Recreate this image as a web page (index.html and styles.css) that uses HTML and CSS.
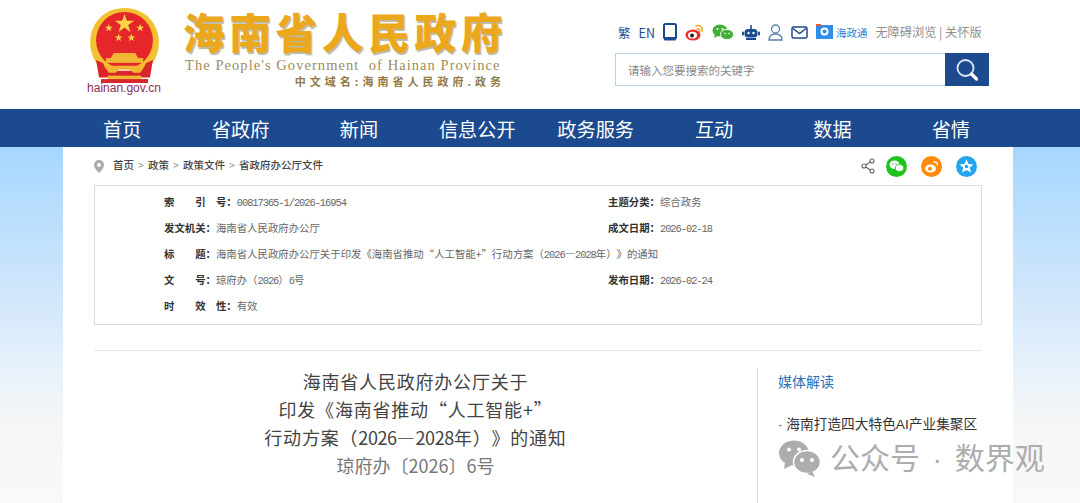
FILE: index.html
```html
<!DOCTYPE html>
<html lang="zh-CN">
<head>
    <meta charset="UTF-8">
    <meta name="viewport" content="width=device-width, initial-scale=1.0">
    <title>海南省人民政府</title>
    <link rel="stylesheet" href="styles.css">
</head>
<body>
    <header class="top">
        <div class="emblem">
            <svg class="emblem-img" width="71" height="75" viewBox="2 1 70 76.500">
                <path d="M37 1C17 1 2 16 2 36c0 12 5 21 12 28h46c7-7 12-16 12-28C72 16 57 1 37 1z" fill="#f2c230"/>
                <circle cx="37" cy="34" r="29" fill="#e5262a"/>
                <polygon points="37,7 39.400,14 46.800,14 40.800,18.400 43,25.400 37,21 31,25.400 33.200,18.400 27.200,14 34.600,14" fill="#f8d648"/>
                <polygon points="21,17 22,20 25,20 22.600,21.800 23.500,24.800 21,23 18.500,24.800 19.400,21.800 17,20 20,20" fill="#f8d648"/>
                <polygon points="53,17 54,20 57,20 54.600,21.800 55.500,24.800 53,23 50.500,24.800 51.400,21.800 49,20 52,20" fill="#f8d648"/>
                <polygon points="31,27 32,30 35,30 32.600,31.800 33.500,34.800 31,33 28.500,34.800 29.400,31.800 27,30 30,30" fill="#f8d648"/>
                <polygon points="44,27 45,30 48,30 45.600,31.800 46.500,34.800 44,33 41.500,34.800 42.400,31.800 40,30 43,30" fill="#f8d648"/>
                <path d="M26 47h22l3 5H23z" fill="#f2b632"/>
                <rect x="18" y="52" width="38" height="5" fill="#f2b632"/>
                <path d="M8 54l7 3c2 5 7 8 13 8h18c6 0 11-3 13-8l7-3-3 18H11z" fill="#d8262a"/>
                <path d="M16 60h42l-5 7h-7l-4-4h-10l-4 4h-7z" fill="#f2b632"/>
                <rect x="20" y="70" width="34" height="4" fill="#f2b632"/>
                <rect x="13" y="73.500" width="48" height="4" fill="#d8262a"/>
            </svg>
            <span class="domain">hainan.gov.cn</span>
        </div>
        <div class="brand">
            <div class="brand-name">海南省人民政府</div>
            <div class="brand-en">The People's Government&nbsp; of Hainan Province</div>
            <div class="brand-cn">中文域名:海南省人民政府.政务</div>
        </div>
        <div class="tools">
            <div class="tool-row">
                <a class="tool-link">繁</a>
                <a class="tool-link">EN</a>
                <svg class="tool-icon" width="14" height="18" viewBox="0 0 14 18"><rect x="1" y="1" width="12" height="14.500" rx="1.500" fill="none" stroke="#1c4a8f" stroke-width="2"/><rect x="1" y="14" width="12" height="3.500" rx="1" fill="#1c4a8f"/></svg>
                <svg class="tool-icon" width="19" height="17" viewBox="0 0 19 17"><ellipse cx="8" cy="11" rx="7.500" ry="5.500" fill="#e6312a"/><ellipse cx="7.500" cy="11.200" rx="4.500" ry="3.400" fill="#fff"/><circle cx="7" cy="11.400" r="2" fill="#222"/><path d="M11 2c4-1.500 7 1.500 6 5.500M12 5c2-.6 3 .6 2.600 2.400" fill="none" stroke="#f5a623" stroke-width="1.500" stroke-linecap="round"/></svg>
                <svg class="tool-icon" width="22" height="17" viewBox="0 0 22 17"><ellipse cx="8" cy="6.500" rx="7.500" ry="6" fill="#41b035"/><path d="M3 10l-1 4 4-2z" fill="#41b035"/><ellipse cx="15" cy="10.500" rx="6.500" ry="5.200" fill="#41b035" stroke="#fff" stroke-width="1"/><circle cx="5.500" cy="5" r="1" fill="#fff"/><circle cx="10.500" cy="5" r="1" fill="#fff"/><circle cx="13" cy="9.500" r=".8" fill="#fff"/><circle cx="17" cy="9.500" r=".8" fill="#fff"/></svg>
                <svg class="tool-icon" width="18" height="15" viewBox="0 0 18 15"><rect x="8.200" y="0" width="1.600" height="5" fill="#1c4a8f"/><rect x="2.500" y="4" width="13" height="8.500" rx="3.500" fill="#1c4a8f"/><rect x="0" y="6.500" width="2" height="4" rx="1" fill="#1c4a8f"/><rect x="16" y="6.500" width="2" height="4" rx="1" fill="#1c4a8f"/><circle cx="6.500" cy="8" r="1.200" fill="#fff"/><circle cx="11.500" cy="8" r="1.200" fill="#fff"/><rect x="4" y="13" width="10" height="2" fill="#1c4a8f"/></svg>
                <svg class="tool-icon" width="15" height="17" viewBox="0 0 15 17"><circle cx="7.500" cy="5" r="4" fill="none" stroke="#5a7fa8" stroke-width="1.300"/><path d="M1 16c0-4 2.500-6 6.500-6s6.500 2 6.500 6z" fill="none" stroke="#5a7fa8" stroke-width="1.300"/></svg>
                <svg class="tool-icon" width="17" height="13" viewBox="0 0 17 13"><rect x="1" y="1" width="15" height="11" rx="1.500" fill="none" stroke="#1c4a8f" stroke-width="1.500"/><path d="M2 2.500l6.500 5 6.500-5" fill="none" stroke="#1c4a8f" stroke-width="1.500"/></svg>
                <a class="tool-app">
                    <svg width="17" height="17" viewBox="0 0 17 17"><rect width="17" height="14" y="1" fill="#2f8fe8"/><rect width="5" height="2" fill="#e65a3a"/><circle cx="8.500" cy="7.500" r="4" fill="#fff"/><circle cx="8.500" cy="7.500" r="2" fill="#2f8fe8"/></svg>
                    海政通
                </a>
                <a class="tool-access">无障碍浏览 | 关怀版</a>
            </div>
            <form class="search">
                <input class="search-input" type="text" placeholder="请输入您要搜索的关键字">
                <button class="search-btn" type="button" aria-label="搜索">
                    <svg width="26" height="26" viewBox="0 0 26 26"><circle cx="11.500" cy="11" r="8" fill="none" stroke="#dfe8f2" stroke-width="1.800"/><path d="M17.500 17l5 5" stroke="#fff" stroke-width="3.200" stroke-linecap="round"/></svg>
                </button>
            </form>
        </div>
    </header>

    <nav class="nav">
        <a>首页</a>
        <a>省政府</a>
        <a>新闻</a>
        <a>信息公开</a>
        <a>政务服务</a>
        <a>互动</a>
        <a>数据</a>
        <a>省情</a>
    </nav>

    <main class="page">
        <div class="crumb-row">
            <div class="crumbs">
                <svg width="10" height="13" viewBox="0 0 10 13"><path d="M5 0a5 5 0 0 0-5 5c0 3.500 5 8 5 8s5-4.500 5-8a5 5 0 0 0-5-5z" fill="#aaa"/><circle cx="5" cy="5" r="2" fill="#fff"/></svg>
                <div class="crumb-text">
                    <span>首页</span><span class="crumb-sep">&gt;</span><span>政策</span><span class="crumb-sep">&gt;</span><span>政策文件</span><span class="crumb-sep">&gt;</span><span>省政府办公厅文件</span>
                </div>
            </div>
            <div class="share">
                <svg class="share-first" width="14" height="16" viewBox="0 0 14 16"><g fill="none" stroke="#666" stroke-width="1.100"><circle cx="3" cy="8" r="2"/><circle cx="11" cy="3" r="2"/><circle cx="11" cy="13" r="2"/><path d="M4.800 7l4.500-3M4.800 9l4.500 3"/></g></svg>
                <svg class="share-icon" width="21" height="21" viewBox="0 0 21 21"><circle cx="10.500" cy="10.500" r="10.500" fill="#1ec31e"/><ellipse cx="8.500" cy="8.800" rx="5" ry="4.200" fill="#fff"/><ellipse cx="13.500" cy="12" rx="4.200" ry="3.400" fill="#fff" stroke="#1ec31e" stroke-width=".8"/><circle cx="7" cy="8" r=".7" fill="#1ec31e"/><circle cx="10" cy="8" r=".7" fill="#1ec31e"/></svg>
                <svg class="share-icon" width="21" height="21" viewBox="0 0 21 21"><circle cx="10.500" cy="10.500" r="10.500" fill="#ff8a0c"/><ellipse cx="9.500" cy="12.500" rx="5.500" ry="4" fill="#fff"/><circle cx="9" cy="12.700" r="2" fill="#ff8a0c"/><path d="M12.500 6c2.500-.8 4.500 1 4 3.500" fill="none" stroke="#fff" stroke-width="1.200" stroke-linecap="round"/></svg>
                <svg class="share-icon" width="21" height="21" viewBox="0 0 21 21"><circle cx="10.500" cy="10.500" r="10.500" fill="#25a5f0"/><polygon points="10.500,3.500 12.500,8 17.500,8.400 13.700,11.600 15,16.500 10.500,13.900 6,16.500 7.300,11.600 3.500,8.400 8.500,8" fill="#fff"/><circle cx="10.500" cy="10.500" r="1.800" fill="#25a5f0"/></svg>
            </div>
        </div>

        <section class="meta">
            <div class="meta-row">
                <div class="meta-cell"><b>索　　引　号：</b><span class="num">00817365-1/2026-16954</span></div>
                <div class="meta-cell"><b>主题分类：</b>综合政务</div>
            </div>
            <div class="meta-row">
                <div class="meta-cell"><b>发文机关：</b>海南省人民政府办公厅</div>
                <div class="meta-cell"><b>成文日期：</b><span class="num">2026-02-18</span></div>
            </div>
            <div class="meta-row">
                <div class="meta-cell meta-wide"><b>标　　题：</b>海南省人民政府办公厅关于印发《海南省推动“人工智能+”行动方案（<span class="num">2026</span>—<span class="num">2028</span>年）》的通知</div>
            </div>
            <div class="meta-row">
                <div class="meta-cell"><b>文　　号：</b>琼府办（<span class="num">2026</span>）<span class="num">6</span>号</div>
                <div class="meta-cell"><b>发布日期：</b><span class="num">2026-02-24</span></div>
            </div>
            <div class="meta-row">
                <div class="meta-cell"><b>时　　效　性：</b>有效</div>
            </div>
        </section>

        <div class="content">
            <article class="article">
                <h1 class="article-title">海南省人民政府办公厅关于<br>印发《海南省推动“人工智能+”<br>行动方案（<span class="year">2026</span>—<span class="year">2028</span>年）》的通知</h1>
                <p class="article-no">琼府办〔2026〕6号</p>
            </article>
            <aside class="side">
                <h2 class="side-title">媒体解读</h2>
                <p class="side-item">· 海南打造四大特色AI产业集聚区</p>
            </aside>
        </div>
    </main>

    <div class="watermark">
        <svg width="42" height="37" viewBox="0 0 42 37"><ellipse cx="15" cy="13" rx="15" ry="12.500" fill="#adadad"/><path d="M6 22l-1 7 8-4z" fill="#adadad"/><ellipse cx="28" cy="22" rx="13.500" ry="11.500" fill="#adadad" stroke="#fff" stroke-width="1.500"/><path d="M33 31l3 6-8-3z" fill="#adadad"/><circle cx="10" cy="9.500" r="2" fill="#fff"/><circle cx="20" cy="9.500" r="2" fill="#fff"/><circle cx="23" cy="20" r="2" fill="#fff"/><circle cx="33" cy="20" r="2" fill="#fff"/></svg>
        <span>公众号 · 数界观</span>
    </div>
</body>
</html>
```

FILE: styles.css
```css
html, body {
    height: 503px;
    overflow: hidden;
}
body {
    margin: 0;
    font-family: "Noto Sans CJK SC", sans-serif;
    color: #333;
    text-spacing-trim: space-all;
    background: linear-gradient(#a6d7ff 147px, #cfe6fb 290px, #e6f1fb 365px, #f5f6f6 425px, #f9f9f9 503px);
}
a {
    cursor: pointer;
}

/* header */
.top {
    height: 109px;
    background: #fff;
    display: flex;
    padding-left: 86px;
    box-sizing: border-box;
}
.emblem {
    width: 76px;
    padding-top: 8px;
    display: flex;
    flex-direction: column;
    align-items: center;
}
.emblem-img {
    display: block;
}
.domain {
    font-family: "Liberation Sans", sans-serif;
    font-size: 12px;
    line-height: 10px;
    color: #8c2c55;
    white-space: nowrap;
}
.brand {
    width: 322px;
    margin-left: 21px;
    padding-top: 4px;
    display: flex;
    flex-direction: column;
}
.brand-name {
    font-size: 42px;
    line-height: 53px;
    font-weight: 900;
    letter-spacing: 4.300px;
    color: #eca81c;
    text-shadow: 1px 2px 1px #b9b9a8;
    white-space: nowrap;
}
.brand-en {
    font-family: "Liberation Serif", serif;
    font-size: 14.500px;
    line-height: 16px;
    padding-left: 2px;
    letter-spacing: 1.060px;
    color: #a08c58;
    white-space: nowrap;
}
.brand-cn {
    font-size: 11px;
    line-height: 16px;
    font-weight: 700;
    letter-spacing: 4px;
    color: #8f7a48;
    text-align: right;
    white-space: nowrap;
}
.tools {
    width: 374px;
    margin-left: 110px;
    padding-top: 21px;
}
.tool-row {
    height: 22px;
    padding-left: 3px;
    display: flex;
    align-items: center;
    gap: 8px;
    white-space: nowrap;
}
.tool-link {
    font-size: 12.500px;
    color: #1c4a8f;
}
.tool-icon {
    display: block;
}
.tool-app {
    display: flex;
    align-items: center;
    gap: 3px;
    font-size: 10.500px;
    color: #2a80d8;
}
.tool-access {
    font-size: 12.200px;
    color: #8f8f8f;
}
.search {
    display: flex;
    height: 33px;
    margin-top: 10px;
}
.search-input {
    width: 330px;
    height: 33px;
    box-sizing: border-box;
    border: 1px solid #b9d0ea;
    border-right: none;
    padding: 0 12px;
    font-family: inherit;
    font-size: 11.500px;
    outline: none;
}
.search-input::placeholder {
    color: #8a8a8a;
}
.search-btn {
    width: 44px;
    height: 33px;
    padding: 0;
    border: none;
    background: #1c4a8f;
    display: flex;
    align-items: center;
    justify-content: center;
}

/* nav */
.nav {
    height: 38px;
    background: #1c4a8f;
    display: flex;
    padding: 0 70px 0 63px;
}
.nav a {
    flex: 1 1 0;
    text-align: center;
    color: #fff;
    font-size: 19.200px;
    line-height: 40px;
}

/* page */
.page {
    width: 950px;
    height: 356px;
    margin-left: 63px;
    padding: 0 31px;
    box-sizing: border-box;
    background: #fff;
}
.crumb-row {
    height: 38px;
    display: flex;
    justify-content: space-between;
    align-items: center;
}
.crumbs {
    display: flex;
    align-items: center;
    gap: 9px;
}
.crumb-text {
    display: flex;
    padding-bottom: 3px;
    font-size: 10.500px;
    font-weight: 500;
    color: #444;
}
.crumb-sep {
    width: 14px;
    text-align: center;
    color: #888;
    font-weight: 400;
}
.share {
    display: flex;
    align-items: center;
    padding-right: 5px;
    gap: 14px;
}
.share-first {
    display: block;
    margin-right: -3px;
}
.share-icon {
    display: block;
}
.meta {
    height: 140px;
    box-sizing: border-box;
    border: 1px solid #dcdcdc;
    padding-top: 3px;
}
.meta-row {
    height: 26px;
    display: flex;
    padding-left: 69px;
}
.meta-cell {
    flex: none;
    width: 444px;
    font-size: 10.400px;
    line-height: 26px;
    color: #666;
    white-space: nowrap;
}
.meta-cell b {
    color: #333;
}
.meta-wide {
    width: auto;
}
.num {
    font-family: "Liberation Mono", monospace;
    letter-spacing: -1.040px;
}
.content {
    display: flex;
    margin-top: 25px;
    border-top: 1px solid #e8e8e8;
    padding-top: 17px;
}
.article {
    width: 643px;
    margin-top: -1px;
    text-align: center;
}
.article-title {
    margin: 0;
    font-size: 18px;
    font-weight: 400;
    line-height: 28px;
    letter-spacing: .8px;
    color: #444;
}
.year {
    letter-spacing: -.4px;
}
.article-no {
    margin: 0;
    font-size: 18px;
    line-height: 28px;
    color: #777;
}
.side {
    width: 225px;
    height: 135px;
    margin-left: 20px;
    box-sizing: border-box;
    border-left: 1px solid #ddd;
    padding-left: 20px;
    white-space: nowrap;
}
.side-title {
    margin: 0;
    font-size: 14px;
    font-weight: 400;
    line-height: 26px;
    color: #2a6fb8;
}
.side-item {
    margin: 18px 0 0;
    font-family: "Liberation Sans", "Noto Sans CJK SC", sans-serif;
    font-size: 13.700px;
    line-height: 26px;
    color: #333;
}

/* sits over the page, added by the repost */
.watermark {
    position: absolute;
    left: 779px;
    top: 440px;
    display: flex;
    align-items: center;
    gap: 9px;
    font-family: "Liberation Sans", "Noto Sans CJK SC", sans-serif;
    font-size: 30px;
    word-spacing: 4px;
    line-height: 37px;
    color: #adadad;
    white-space: nowrap;
}
```
